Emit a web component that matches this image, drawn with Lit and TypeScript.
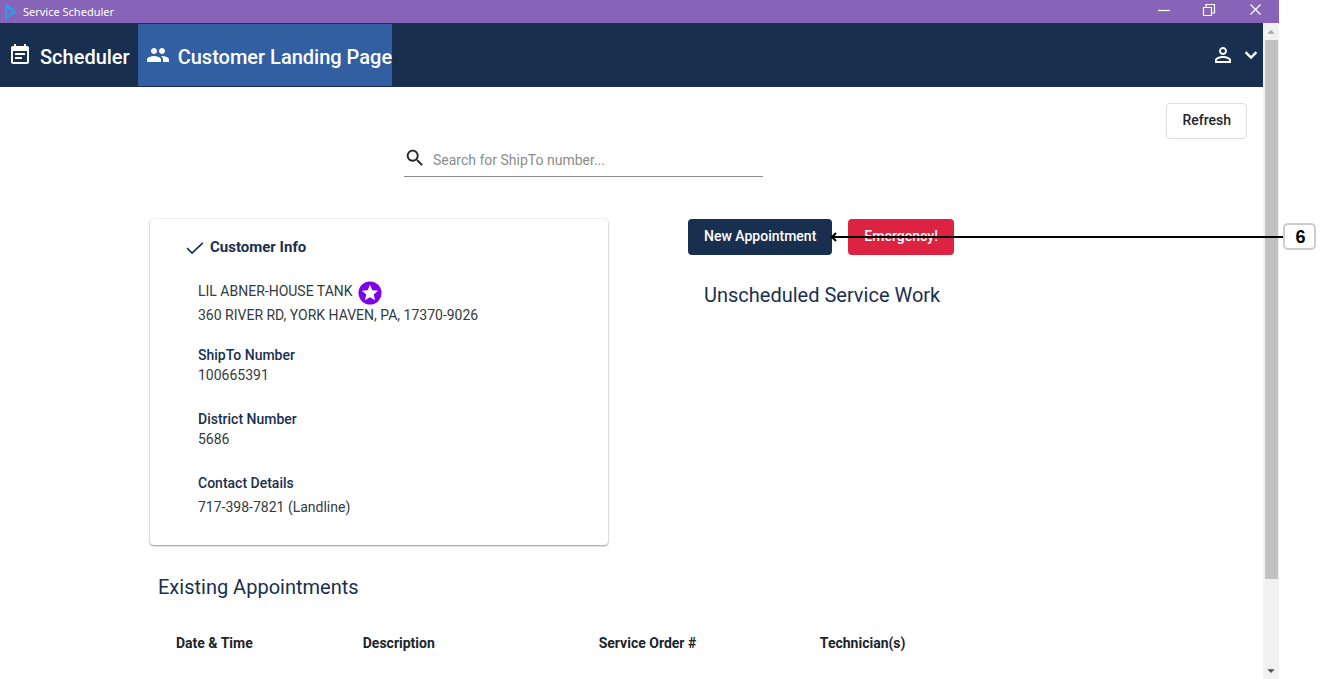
import { LitElement, html, css, svg } from "lit";
import { customElement, property } from "lit/decorators.js";

const icons: Record<string, unknown> = {
  calendar: svg`<path d="M17 10H7v2h10v-2zm2-7h-1V1h-2v2H8V1H6v2H5c-1.11 0-1.99.9-1.99 2L3 19c0 1.1.89 2 2 2h14c1.1 0 2-.9 2-2V5c0-1.1-.9-2-2-2zm0 16H5V8h14v11zm-5-5H7v2h7v-2z"/>`,
  people: svg`<path d="M16 11c1.66 0 2.99-1.34 2.99-3S17.66 5 16 5s-3 1.34-3 3 1.34 3 3 3zm-8 0c1.66 0 2.99-1.34 2.99-3S9.66 5 8 5 5 6.34 5 8s1.34 3 3 3zm0 2c-2.33 0-7 1.17-7 3.5V19h14v-2.5c0-2.33-4.67-3.5-7-3.5zm8 0c-.29 0-.62.02-.97.05 1.16.84 1.97 1.97 1.97 3.45V19h6v-2.5c0-2.33-4.67-3.5-7-3.5z"/>`,
  person: svg`<path d="M12 5.9a2.1 2.1 0 1 1 0 4.2 2.1 2.1 0 0 1 0-4.2m0 9c2.97 0 6.1 1.46 6.1 2.1v1.1H5.9V17c0-.64 3.13-2.1 6.1-2.1M12 4C9.79 4 8 5.79 8 8s1.79 4 4 4 4-1.79 4-4-1.79-4-4-4zm0 9c-2.67 0-8 1.34-8 4v3h16v-3c0-2.66-5.33-4-8-4z"/>`,
  chevron: svg`<path d="M16.59 8.59 12 13.17 7.41 8.59 6 10l6 6 6-6z" stroke="currentColor" stroke-width=".5"/>`,
  search: svg`<path d="M15.5 14h-.79l-.28-.27C15.41 12.59 16 11.11 16 9.5 16 5.91 13.09 3 9.5 3S3 5.91 3 9.5 5.91 16 9.5 16c1.61 0 3.09-.59 4.23-1.57l.27.28v.79l5 4.99L20.49 19l-4.99-5zm-6 0C7.01 14 5 11.99 5 9.5S7.01 5 9.5 5 14 7.01 14 9.5 11.99 14 9.5 14z"/>`,
  check: svg`<path d="M1.500 13.500 8 20 22.500 6.500" fill="none" stroke="currentColor" stroke-width="2.200"/>`,
  star: svg`<circle cx="12" cy="12" r="11.5" fill="#7d00e6"/><path fill="#fff" d="m12 3.8 2.3 5.4 5.9.5-4.5 3.9 1.4 5.7-5.1-3.1-5.1 3.1 1.4-5.7-4.5-3.9 5.9-.5z"/>`,
  logo: svg`<path fill="#2f9be0" fill-rule="evenodd" d="M5.300.7 19 8.700v5L5.300 22.500zM8.500 7.500v4.500L8 18.500l7.500-7.500z"/>`,
  minimize: svg`<path d="M6 12.500h12" fill="none" stroke="currentColor" stroke-width="1.200"/>`,
  restore: svg`<path d="M5.500 9.500h8v8h-8zM8 9V6.500h8.500V15H14" fill="none" stroke="currentColor" stroke-width="1.200"/>`,
  close: svg`<path d="m6.500 6.500 10 10M16.500 6.500l-10 10" fill="none" stroke="currentColor" stroke-width="1.200"/>`,
  up: svg`<path d="M6.500 14.500 12 9l5.500 5.500z"/>`,
  down: svg`<path d="M6.500 9.500 12 15l5.500-5.500z"/>`,
};

@customElement("ui-icon")
class UiIcon extends LitElement {
  @property() name = "";
  static styles = css`
    :host { display: inline-flex; flex: none; width: 24px; height: 24px; }
    .icon { width: 100%; height: 100%; fill: currentColor; }
  `;
  render() {
    return html`<svg class="icon" viewBox="0 0 24 24" aria-hidden="true">${icons[this.name]}</svg>`;
  }
}

@customElement("window-bar")
class WindowBar extends LitElement {
  static styles = css`
    :host {
      display: flex; align-items: center; height: 23px;
      background: #8764b8; color: #fff;
      font: 11px/22px "Noto Sans", sans-serif;
    }
    .logo { width: 18px; height: 18px; margin: 0 4px 0 1px; }
    .title { flex: 1; }
    .control {
      display: flex; justify-content: center; align-items: center;
      align-self: flex-start; width: 46px; height: 20px;
      margin: 0; padding: 0; border: 0; background: none; color: inherit;
    }
  `;
  render() {
    return html`
      <ui-icon class="logo" name="logo"></ui-icon>
      <span class="title">Service Scheduler</span>
      <button class="control" aria-label="Minimize"><ui-icon name="minimize"></ui-icon></button>
      <button class="control" aria-label="Restore"><ui-icon name="restore"></ui-icon></button>
      <button class="control" aria-label="Close"><ui-icon name="close"></ui-icon></button>
    `;
  }
}

@customElement("scroll-rail")
class ScrollRail extends LitElement {
  static styles = css`
    :host { display: flex; flex-direction: column; width: 16px; background: #f1f1f1; }
    .arrow { display: flex; align-items: center; height: 17px; color: #505050; }
    .glyph { width: 16px; height: 16px; }
    .dim { color: #a3a3a3; }
    .track { flex: 1; padding: 0 1px 0 2px; }
    .thumb { height: 86.7%; background: #c1c1c1; }
  `;
  render() {
    return html`
      <div class="arrow dim"><ui-icon class="glyph" name="up"></ui-icon></div>
      <div class="track"><div class="thumb"></div></div>
      <div class="arrow"><ui-icon class="glyph" name="down"></ui-icon></div>
    `;
  }
}

@customElement("app-root")
class AppRoot extends LitElement {
  static styles = css`
    :host {
      display: block; position: relative; height: 100vh; overflow: hidden;
      background: #fff; color: #212529;
      font: 14px/20px Roboto, sans-serif;
    }
    * { box-sizing: border-box; }
    button, input { font: inherit; color: inherit; }
    h1, h2, p, dl, dt, dd { margin: 0; }

    .window { display: flex; flex-direction: column; height: 100%; margin-right: 44px; }
    .viewport { display: flex; flex: 1; min-height: 0; }
    .page { flex: 1; min-width: 0; overflow: hidden; }

    .nav {
      display: flex; align-items: stretch; height: 64px; padding: 1px 0;
      background: #192f50; color: #fff;
    }
    .tab {
      display: flex; align-items: center; gap: 8px; padding: 0 8px;
      color: inherit; text-decoration: none; font-size: 20px; font-weight: 500;
    }
    .tab-label { padding-top: 4px; }
    .active { padding-right: 0; background: #325fa2; }
    .account {
      display: flex; align-items: center; gap: 4px; margin-left: auto;
      padding: 0; border: 0; background: none;
    }

    .toolbar { display: flex; justify-content: flex-end; padding: 16px 16px 0; }
    .btn {
      height: 36px; padding: 0 15px 2px; border: 1px solid transparent;
      border-radius: 4px; font-weight: 500; white-space: nowrap;
    }
    .plain { border-color: #dcdfe2; background: #fff; }
    .primary { background: #192f50; color: #fff; }
    .danger { background: #dc2342; color: #fff; }

    .search {
      display: flex; align-items: center; gap: 7px; width: 359px; height: 38px;
      margin-left: 404px; border-bottom: 1px solid #8c8c8c;
    }
    .search-icon { width: 22px; height: 22px; }
    .search-input {
      flex: 1; min-width: 0; padding: 4px 0 0; border: 0; outline: 0;
      background: none;
    }
    .search-input::placeholder { color: #8c8c8c; opacity: 1; }

    .columns { display: flex; gap: 80px; padding: 42px 16px 0 150px; }
    .card {
      flex: 0 1 458px; padding: 16px 36px 28px; border-radius: 4px;
      box-shadow: 0 1px 2px rgba(0, 0, 0, 0.4), 0 0 2px rgba(0, 0, 0, 0.12);
    }
    .card-head {
      display: flex; align-items: center; gap: 6px; color: #192f50;
      font-size: 15px; line-height: 24px; font-weight: 700;
    }
    .check { width: 18px; height: 20px; }
    .details { padding: 20px 12px 0; color: #343a40; }
    .address { margin-bottom: 18px; line-height: 24px; }
    .name { display: flex; align-items: center; gap: 5px; height: 24px; }
    .star { margin-top: 4px; }
    .term { color: #192f50; font-weight: 500; }
    .value { margin-bottom: 24px; }
    .phone { margin-bottom: 0; padding-top: 4px; }

    .actions { display: flex; gap: 16px; }
    .title { color: #192f50; font-size: 20px; line-height: 24px; font-weight: 400; }
    .work { padding: 28px 16px 0; }

    .existing { padding: 30px 122px 0 158px; }
    .table { width: 100%; margin-top: 24px; border-collapse: collapse; table-layout: fixed; }
    .cell { height: 40px; padding: 0 18px; text-align: left; font-weight: 700; }
    .date { width: 19%; }
    .description { width: 24%; }
    .order { width: 22.5%; }

    .callout {
      position: absolute; top: 223px; left: 830px; right: 7px;
      display: flex; align-items: center; color: #000; pointer-events: none;
    }
    .head { width: 8px; height: 10px; margin-right: -6px; }
    .line { flex: 1; height: 2px; background: #000; }
    .badge {
      display: grid; place-items: center; width: 33px; height: 27px; padding-left: 2px;
      border: 2px solid #ccc; border-radius: 5px; background: #fff;
      font: bold 18px/22px "Liberation Sans", sans-serif;
    }
  `;

  private facts = [
    ["ShipTo Number", "100665391", "value"],
    ["District Number", "5686", "value"],
    ["Contact Details", "717-398-7821 (Landline)", "value phone"],
  ];

  render() {
    return html`
      <div class="window">
        <window-bar></window-bar>
        <div class="viewport">
          <div class="page">
            <nav class="nav">
              <a class="tab" href="#scheduler"><ui-icon name="calendar"></ui-icon><span class="tab-label">Scheduler</span></a>
              <a class="tab active" href="#customer"><ui-icon name="people"></ui-icon><span class="tab-label">Customer Landing Page</span></a>
              <button class="account" aria-label="Account">
                <ui-icon name="person"></ui-icon><ui-icon name="chevron"></ui-icon>
              </button>
            </nav>
            <main>
              <div class="toolbar"><button class="btn plain">Refresh</button></div>
              <label class="search">
                <ui-icon class="search-icon" name="search"></ui-icon>
                <input class="search-input" type="text" aria-label="Search for ShipTo number" placeholder="Search for ShipTo number..." />
              </label>
              <div class="columns">
                <section class="card">
                  <h2 class="card-head"><ui-icon class="check" name="check"></ui-icon>Customer Info</h2>
                  <div class="details">
                    <div class="address">
                      <p class="name">LIL ABNER-HOUSE TANK<ui-icon class="star" name="star"></ui-icon></p>
                      <p>360 RIVER RD, YORK HAVEN, PA, 17370-9026</p>
                    </div>
                    <dl>
                      ${this.facts.map(([term, value, cls]) => html`<dt class="term">${term}</dt><dd class=${cls}>${value}</dd>`)}
                    </dl>
                  </div>
                </section>
                <section>
                  <div class="actions">
                    <button class="btn primary">New Appointment</button>
                    <button class="btn danger">Emergency!</button>
                  </div>
                  <div class="work"><h2 class="title">Unscheduled Service Work</h2></div>
                </section>
              </div>
              <section class="existing">
                <h2 class="title">Existing Appointments</h2>
                <table class="table">
                  <thead>
                    <tr>
                      <th class="cell date">Date &amp; Time</th>
                      <th class="cell description">Description</th>
                      <th class="cell order">Service Order #</th>
                      <th class="cell">Technician(s)</th>
                    </tr>
                  </thead>
                </table>
              </section>
            </main>
          </div>
          <scroll-rail></scroll-rail>
        </div>
      </div>
      <div class="callout">
        <svg class="head" viewBox="0 0 8 10" aria-hidden="true">
          <path d="M6 1 2 5l4 4" fill="none" stroke="#000" stroke-width="2" />
        </svg>
        <span class="line"></span>
        <span class="badge">6</span>
      </div>
    `;
  }
}
